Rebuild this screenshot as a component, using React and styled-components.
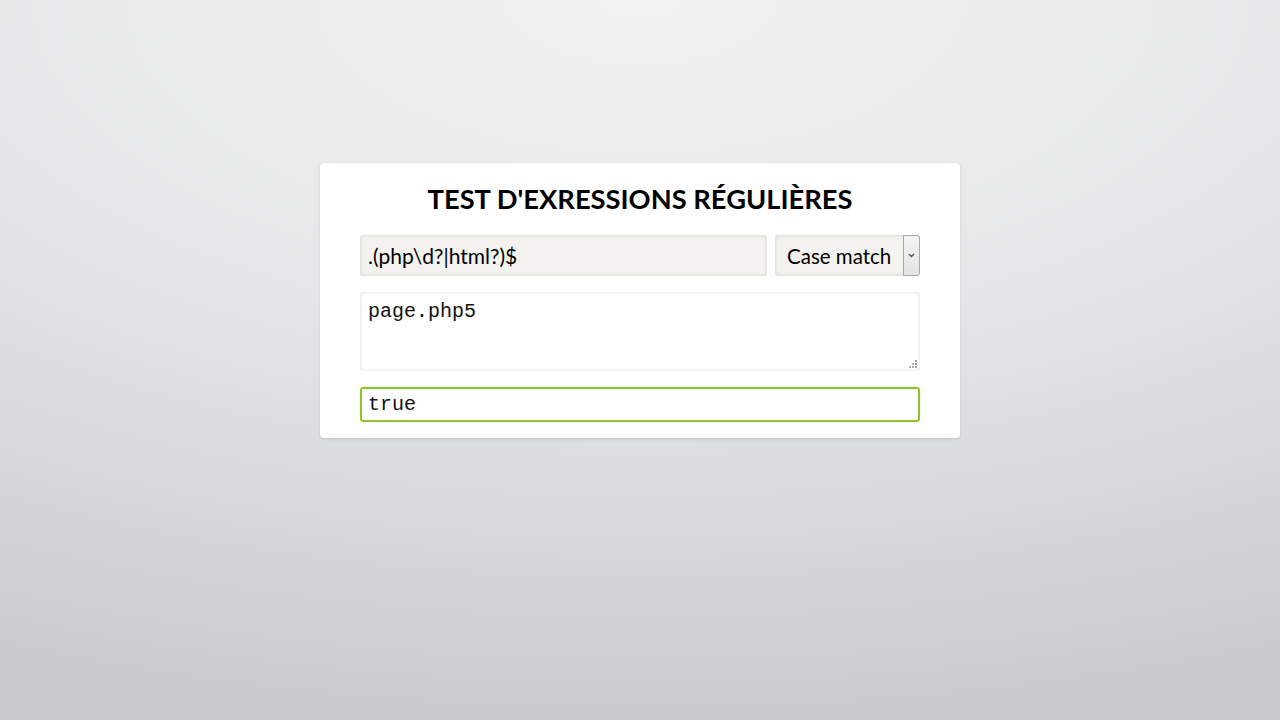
import styled, { createGlobalStyle } from "styled-components"

const GlobalStyle = createGlobalStyle`
    html, body {
        margin: 0;
        height: 100%;
    }
    body {
        background: radial-gradient(ellipse 120% 100% at 50% 0%, #f2f2f2 0%, #e6e7e8 45%, #c8cbcf 100%);
        font-family: Lato, "Open Sans", sans-serif;
    }
`

export default function App() {
    return (
        <Page>
            <GlobalStyle />
            <Card>
                <Title>TEST D'EXRESSIONS RÉGULIÈRES</Title>
                <Row>
                    <PatternInput defaultValue=".(php\d?|html?)$" />
                    <Select>
                        <span>Case match</span>
                        <Arrow>
                            <svg width="7" height="5" viewBox="0 0 7 5">
                                <path d="M1 1 L3.5 3.5 L6 1" fill="none" stroke="#555" strokeWidth="1.3" />
                            </svg>
                        </Arrow>
                    </Select>
                </Row>
                <SubjectWrap>
                    <Subject defaultValue="page.php5" />
                    <Grip>
                        <svg width="9" height="9" viewBox="0 0 9 9">
                            <g fill="#aaa">
                                <rect x="6" y="0" width="2" height="2" />
                                <rect x="3" y="3" width="2" height="2" />
                                <rect x="6" y="3" width="2" height="2" />
                                <rect x="0" y="6" width="2" height="2" />
                                <rect x="3" y="6" width="2" height="2" />
                                <rect x="6" y="6" width="2" height="2" />
                            </g>
                        </svg>
                    </Grip>
                </SubjectWrap>
                <Result $ok>true</Result>
            </Card>
        </Page>
    )
}

const Page = styled.div`
    height: 720px;
    display: flex;
    justify-content: center;
    padding-top: 163px;
    box-sizing: border-box;
`

const Card = styled.div`
    width: 640px;
    height: 275px;
    box-sizing: border-box;
    background: #fff;
    border-radius: 4px;
    box-shadow: 0 1px 3px rgba(0, 0, 0, 0.12);
    padding: 18px 40px 16px;
    display: flex;
    flex-direction: column;
`

const Title = styled.h1`
    margin: 0 0 18px;
    text-align: center;
    font-size: 27.3px;
    font-weight: 700;
    line-height: 36px;
    color: #000;
    letter-spacing: 0;
`

const Row = styled.div`
    display: flex;
    gap: 8px;
    height: 41px;
    margin-bottom: 16px;
`

const PatternInput = styled.input`
    flex: 1;
    border: none;
    outline: none;
    border-radius: 3px;
    background: #f3f2ee;
    box-shadow: inset 0 0 4px rgba(0, 0, 0, 0.14);
    font-family: Lato, "Open Sans", sans-serif;
    font-size: 21px;
    color: #000;
    padding: 0 8px;
`

const Select = styled.div`
    width: 145px;
    display: flex;
    align-items: stretch;
    background: #f3f2ee;
    border-radius: 3px;
    box-shadow: inset 0 0 4px rgba(0, 0, 0, 0.14);
    font-size: 20.5px;
    color: #000;

    span {
        flex: 1;
        display: flex;
        align-items: center;
        padding-left: 12px;
    }
`

const Arrow = styled.div`
    width: 15px;
    border: 1px solid #a9a9a9;
    border-radius: 0 3px 3px 0;
    background: linear-gradient(#f4f4f4, #e4e4e4);
    display: flex;
    align-items: center;
    justify-content: center;
`

const SubjectWrap = styled.div`
    position: relative;
    display: flex;
    flex-direction: column;
    margin-bottom: 16px;
`

const Subject = styled.textarea`
    height: 79px;
    box-sizing: border-box;
    border: none;
    outline: none;
    border-radius: 3px;
    background: #fff;
    box-shadow: inset 0 0 4px rgba(0, 0, 0, 0.14);
    font-family: "Liberation Mono", "Courier New", monospace;
    font-size: 20px;
    color: #111;
    padding: 8px 8px;
    margin: 0;
    resize: none;
`

const Grip = styled.div`
    position: absolute;
    right: 2px;
    bottom: 2px;
    line-height: 0;
`

const Result = styled.div`
    height: 35px;
    box-sizing: border-box;
    border: 2px solid ${p => (p.$ok ? "#88c726" : "#d33")};
    border-radius: 3px;
    display: flex;
    align-items: center;
    padding: 0 6px;
    font-family: "Liberation Mono", "Courier New", monospace;
    font-size: 20px;
    color: #111;
`
